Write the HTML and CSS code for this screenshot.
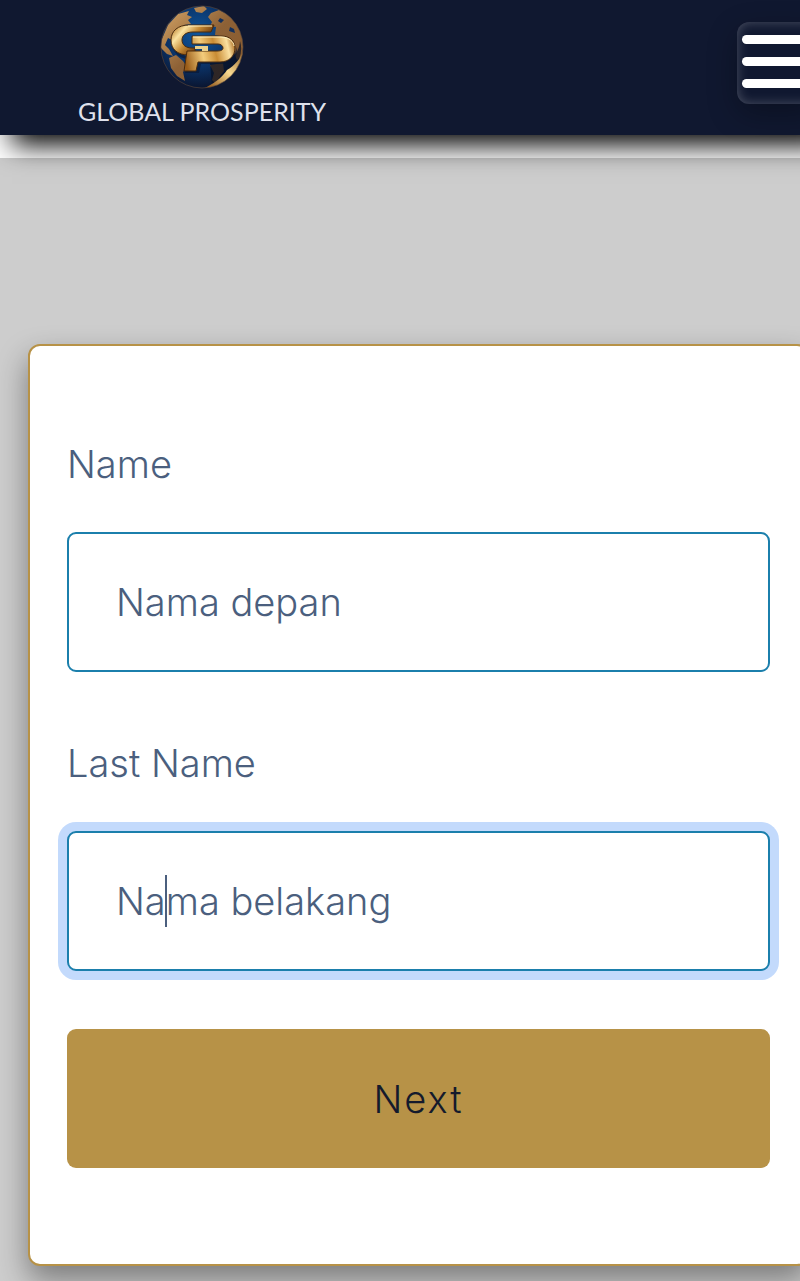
FILE: index.html
```html
<!DOCTYPE html>
<html lang="id">
    <head>
        <meta charset="utf-8">
        <meta name="viewport" content="width=device-width, initial-scale=1">
        <title>Global Prosperity</title>
        <link rel="stylesheet" href="styles.css">
    </head>
    <body>
        <header class="header">
            <a class="logo" href="#">
                <svg class="globe" viewBox="0 0 84 84" aria-hidden="true">
                    <defs>
                        <radialGradient id="sea" cx="45%" cy="35%" r="65%">
                            <stop offset="0" stop-color="#0f569c"/>
                            <stop offset="0.6" stop-color="#0b3266"/>
                            <stop offset="1" stop-color="#0a1530"/>
                        </radialGradient>
                        <linearGradient id="land" x1="0" y1="0" x2="1" y2="1">
                            <stop offset="0" stop-color="#d9a868"/>
                            <stop offset="0.5" stop-color="#8d6136"/>
                            <stop offset="1" stop-color="#8a5a2c"/>
                        </linearGradient>
                        <linearGradient id="goldG" gradientUnits="userSpaceOnUse" x1="12" y1="22" x2="44" y2="50">
                            <stop offset="0" stop-color="#b47422"/>
                            <stop offset="0.25" stop-color="#fbe3a2"/>
                            <stop offset="0.5" stop-color="#c58a35"/>
                            <stop offset="0.75" stop-color="#7d4711"/>
                            <stop offset="1" stop-color="#d49a42"/>
                        </linearGradient>
                        <linearGradient id="goldP" gradientUnits="userSpaceOnUse" x1="24" y1="50" x2="75" y2="38">
                            <stop offset="0" stop-color="#9a5c18"/>
                            <stop offset="0.35" stop-color="#f3cc7c"/>
                            <stop offset="0.6" stop-color="#c98c34"/>
                            <stop offset="0.85" stop-color="#fbe0a0"/>
                            <stop offset="1" stop-color="#a7671c"/>
                        </linearGradient>
                        <linearGradient id="swoosh" gradientUnits="userSpaceOnUse" x1="83" y1="44" x2="46" y2="82">
                            <stop offset="0" stop-color="#8a5a22"/>
                            <stop offset="0.5" stop-color="#f8d990"/>
                            <stop offset="1" stop-color="#8c5013"/>
                        </linearGradient>
                        <clipPath id="ball"><circle cx="42" cy="42" r="41"/></clipPath>
                    </defs>
                    <g clip-path="url(#ball)">
                        <circle cx="42" cy="42" r="41" fill="url(#sea)"/>
                        <path fill="url(#land)" d="M2 34 8 20 18 9 29 6 27 10 32 12 28 15 31 19 24 20 19 24 14 29 12 35 8 33 5 40 9 44 13 51 7 49 0 42ZM34 3 44 1 47 4 42 8 36 7ZM48 12 51 8 59 5 70 11 79 22 84 38 83 50 77 55 73 46 68 37 60 31 55 30 56 22 50 21 52 17ZM9 53 16 50 23 56 27 62 23 67 25 76 17 71 11 63ZM50 60 63 58 64 66 60 71 56 79 52 75 54 68Z"/>
                        <path fill="#14305c" d="M60 13 64 15 61 18 58 16ZM70 22 74 24 75 28 69 26Z"/>
                        <path fill="#071022" opacity="0.7" d="M50 58C68 58 79 51 80 36 85 52 74 68 52 80Z"/>
                        <path fill="url(#swoosh)" d="M84 42C85 64 66 83 43 84 57 77 63 71 67 65 76 60 82 52 84 42Z"/>
                    </g>
                    <circle cx="42" cy="42" r="41" fill="none" stroke="#5e4a3c" stroke-width="1" opacity="0.6"/>
                    <path fill="#081530" opacity="0.6" d="M12 42C16 52 24 54 28 54L25 68H39L41 59H62C73 59 78 52 77 42 75 50 70 54 61 54H30Z"/>
                    <path fill="url(#goldG)" stroke="#4a2a0c" stroke-width="1" d="M54 20 51 27H33C25 27 22 31 22 35 22 40 26 43 32 43H35V50H29C17 50 11 44 11 35 11 26 18 20 29 20Z"/>
                    <path fill="url(#goldP)" stroke="#4a2a0c" stroke-width="1" d="M32 31H61C70 31 75 36 75 43 75 51 69 57 60 57H38L36 66H24L27 46H57C61 46 63 45 63 43 63 41 61 39 58 39H32Z"/>
                    <path fill="#e9d08d" d="M35 41H48V46H42V44H35Z"/>
                    <path fill="none" stroke="#fff0bf" stroke-width="1" d="M28 21H52M33 32H61C69 32 74 37 74 41"/>
                </svg>
                <span class="logo-text">GLOBAL PROSPERITY</span>
            </a>
            <button class="menu" type="button" aria-label="Menu">
                <span class="bar"></span>
                <span class="bar"></span>
                <span class="bar"></span>
            </button>
        </header>
        <main class="content">
            <form class="card">
                <div class="field">
                    <label for="firstName">Name</label>
                    <div class="box">
                        <input type="text" id="firstName" class="input" placeholder="Nama depan">
                    </div>
                </div>
                <div class="field">
                    <label for="lastName">Last Name</label>
                    <div class="box">
                        <input type="text" id="lastName" class="input active" placeholder="Nama belakang">
                        <span class="caret"></span>
                    </div>
                </div>
                <button class="next" type="button">Next</button>
            </form>
        </main>
    </body>
</html>
```

FILE: styles.css
```css
* {
    box-sizing: border-box;
}
html {
    overflow-x: hidden;
}
body {
    margin: 0;
    min-height: 100vh;
    display: flex;
    flex-direction: column;
    overflow-x: hidden;
    background-color: white;
    font-family: Inter, "Liberation Sans", sans-serif;
    font-weight: 300;
}
.header {
    position: relative;
    z-index: 1;
    display: flex;
    justify-content: space-between;
    align-items: flex-start;
    height: 135px;
    margin-right: -40px;
    padding: 0 21px 0 78px;
    background-color: #101830;
    box-shadow: 0 22px 26px -12px black;
}
.logo {
    display: flex;
    flex-direction: column;
    align-items: center;
    padding-top: 5px;
    color: #dfe1ec;
    text-decoration: none;
}
.globe {
    width: 84px;
    height: 84px;
}
.logo-text {
    font-family: Lato, sans-serif;
    font-size: 25px;
    font-weight: 400;
    line-height: 44px;
    white-space: nowrap;
}
.menu {
    display: flex;
    flex-direction: column;
    flex-shrink: 0;
    gap: 13px;
    width: 82px;
    height: 82px;
    margin-top: 22px;
    padding: 13px 5px;
    border: none;
    border-radius: 12px;
    background-color: #101830;
    box-shadow: 0 10px 30px rgba(0, 0, 0, 0.3), inset 0 0 12px rgba(255, 255, 255, 0.25);
}
.bar {
    height: 9px;
    border-radius: 5px;
    background-color: white;
}
.content {
    flex: 1;
    margin-top: 23px;
    padding: 186px 0 15px 28px;
    background-color: #cdcdcd;
}
.card {
    display: flex;
    flex-direction: column;
    gap: 58px;
    margin-right: -9px;
    padding: 88px 37px 96px;
    border: 2px solid #b79247;
    border-radius: 12px;
    background-color: white;
    box-shadow: 0 14px 30px rgba(0, 0, 0, 0.4);
}
.field {
    display: flex;
    flex-direction: column;
    gap: 38px;
}
.field + .field {
    margin-top: 3px;
}
label {
    color: #4b5f7e;
    font-size: 38px;
    line-height: 60px;
}
.box {
    position: relative;
}
.input {
    display: block;
    width: 100%;
    height: 140px;
    padding: 0 47px;
    border: 2px solid #1b7fac;
    border-radius: 9px;
    outline: none;
    background-color: white;
    color: #4b5f7e;
    font: inherit;
    font-size: 38px;
}
.input::placeholder {
    color: #4b5f7e;
    opacity: 1;
}
.active {
    box-shadow: 0 0 0 9px #c3dafc;
}
.caret {
    position: absolute;
    top: 44px;
    left: 98px;
    width: 2px;
    height: 52px;
    background-color: #4b5f7e;
}
.next {
    height: 139px;
    border: none;
    border-radius: 9px;
    background-color: #b79247;
    color: #141a2c;
    font: inherit;
    font-size: 38px;
    letter-spacing: 2px;
}
```
